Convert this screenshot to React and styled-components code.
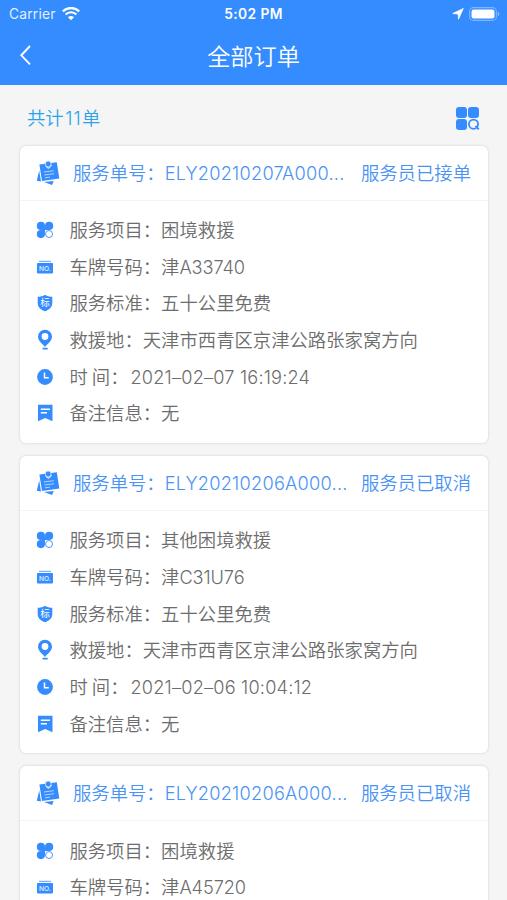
import React from "react";
import styled, { createGlobalStyle } from "styled-components";

const BLUE = "#348cfe";

const GlobalStyle = createGlobalStyle`
  * { box-sizing: border-box; }
  html, body { margin: 0; padding: 0; background: #f5f5f5; }
  body { overflow: hidden; }
`;

const Screen = styled.div`
  width: 507px;
  height: 900px;
  overflow: hidden;
  display: flex;
  flex-direction: column;
  background: #f5f5f5;
  color: #6d6d6d;
  font-family: "Noto Sans CJK SC", sans-serif;
  font-weight: 350;
  font-size: 18.35px;
  white-space: nowrap;
`;

const Header = styled.header`
  flex: none;
  height: 85px;
  background: ${BLUE};
  color: #fff;
`;

const StatusBar = styled.div`
  display: grid;
  grid-template-columns: 1fr auto 1fr;
  align-items: center;
  height: 27px;
  padding: 0 7px 0 9px;
  font-family: Inter, sans-serif;
  font-size: 13.8px;
`;

const Carrier = styled.div`
  display: flex;
  align-items: center;
  gap: 6px;
  font-weight: 400;
  letter-spacing: 0.2px;
  color: #e3efff;
`;

const Clock = styled.div`
  font-weight: 600;
  font-size: 13.8px;
  letter-spacing: 0.4px;
  margin-right: 2px;
`;

const StatusIcons = styled.div`
  display: flex;
  align-items: center;
  justify-content: flex-end;
  gap: 5px;
`;

const NavBar = styled.div`
  display: grid;
  grid-template-columns: 60px 1fr 60px;
  align-items: center;
  height: 56px;
`;

const BackButton = styled.button`
  display: flex;
  height: 44px;
  padding: 0 0 0 19px;
  align-items: center;
  border: 0;
  background: none;
`;

const Title = styled.h1`
  margin: 0;
  padding-bottom: 1px;
  text-align: center;
  font-size: 23.2px;
  font-weight: 350;
`;

const Summary = styled.div`
  flex: none;
  display: flex;
  align-items: center;
  justify-content: space-between;
  height: 61px;
  padding: 5px 27px 0 27px;
  color: #2ba3ea;
`;

const List = styled.main`
  flex: none;
  display: flex;
  flex-direction: column;
  gap: 13.2px;
  padding: 0 19px 0 20px;
`;

const Card = styled.section`
  height: 297px;
  background: #fff;
  border-radius: 6px;
  box-shadow: 0 0 3px rgba(0, 0, 0, 0.16);
`;

const CardHead = styled.div`
  display: flex;
  align-items: center;
  height: 55px;
  padding: 0 17px 0 16px;
  border-bottom: 1px solid #f3f3f3;
  color: #4a93f5;
`;

const Label = styled.span`
  padding-bottom: 2px;
`;

const OrderNumber = styled(Label)`
  flex: 1;
  padding-left: 12px;
`;

const CardBody = styled.div`
  padding: 10.9px 16px 0;
`;

const Row = styled.div`
  display: flex;
  align-items: center;
  height: 36.65px;
`;

const RowIcon = styled.span`
  display: flex;
  width: 33.4px;
`;

const Latin = styled.span`
  font-family: Inter, sans-serif;
  font-weight: 350;
  font-size: 18.2px;
  line-height: 1;
  letter-spacing: ${(p) => p.$spacing || 0}px;
  margin-left: ${(p) => p.$lead || 0}px;
`;

function WifiIcon() {
  return (
    <svg width="18" height="14" viewBox="0 0 18 14" fill="none">
      <path d="M.8 4.300a11.800 11.800 0 0 1 16.400 0" stroke="#fff" strokeWidth="2.300" />
      <path d="M3.600 7.500a7.600 7.600 0 0 1 10.800 0" stroke="#fff" strokeWidth="2.200" />
      <path d="M9 13.300 6 10.200a4.200 4.200 0 0 1 6 0Z" fill="#fff" />
    </svg>
  );
}

function LocationIcon() {
  return (
    <svg width="12" height="12" viewBox="0 0 12 12" fill="#fff">
      <path d="M11.300.5.7 5.500l5.400.600.400 5.200Z" stroke="#fff" strokeWidth=".7" strokeLinejoin="round" />
    </svg>
  );
}

function BatteryIcon() {
  return (
    <svg width="31" height="14" viewBox="0 0 31 14">
      <rect x=".6" y=".6" width="26.800" height="12.800" rx="4" fill="none" stroke="#7fb6ff" strokeWidth="1.100" />
      <rect x="2.500" y="2.500" width="23" height="9" rx="2.300" fill="#fff" />
      <path d="M28.800 4.800c2 .7 2 3.700 0 4.400Z" fill="#8fc0ff" />
    </svg>
  );
}

function BackIcon() {
  return (
    <svg width="13" height="21" viewBox="0 0 13 21" fill="none" stroke="#fff" strokeWidth="1.900">
      <path d="M11 1 2.300 10.300l8.700 9" />
    </svg>
  );
}

function FilterIcon() {
  return (
    <svg width="25" height="25" viewBox="0 0 25 25" fill={BLUE}>
      <rect x="1" y="1" width="11" height="11" rx="3" />
      <rect x="13" y="1" width="11" height="11" rx="3" />
      <rect x="1" y="13" width="11" height="11" rx="3" />
      <circle cx="18.500" cy="18.200" r="4.600" fill="none" stroke={BLUE} strokeWidth="1.800" />
      <path d="m20.500 20 3.300 3.300" stroke={BLUE} strokeWidth="1.800" />
    </svg>
  );
}

function OrderIcon() {
  return (
    <svg width="25" height="26" viewBox="0 0 25 26">
      <path d="M3.200 10.500.8 20.800l4.200.600ZM8 22l8 3 1.700-4Z" fill={BLUE} />
      <path d="m3.400 4.500 17.400-2.300 2.500 16.300L6 21Z" fill={BLUE} />
      <circle cx="12.200" cy="4" r="2.900" fill={BLUE} stroke="#d5e6ff" strokeWidth=".8" />
      <path d="m9.800 6.300 2.700 1.900 3.200-3.100" fill="none" stroke="#d5e6ff" strokeWidth="1.100" />
      <path d="m7.900 12 9.800-1.300M8.400 15l9.700-1.300M9 17.800l5-.7" fill="none" stroke="#b5d3ff" strokeWidth="1" />
    </svg>
  );
}

function ServiceIcon() {
  return (
    <svg width="18" height="18" viewBox="0 0 18 18" fill={BLUE}>
      <circle cx="4.900" cy="4.900" r="4.100" />
      <circle cx="13.100" cy="4.900" r="4.100" />
      <circle cx="4.900" cy="13.100" r="4.100" />
      <path d="M6 6h6v3H9v3H6Z" />
      <circle cx="13" cy="13" r="3.500" fill="#fff" stroke={BLUE} strokeWidth=".9" />
    </svg>
  );
}

function PlateIcon() {
  return (
    <svg width="18" height="18" viewBox="0 0 18 18">
      <path d="M3 3.400h12" stroke="#79b2ff" strokeWidth="1.300" />
      <rect x="1" y="5" width="16" height="10.400" rx=".8" fill={BLUE} />
      <text x="9" y="12.600" fill="#e8f2ff" fontFamily="Inter, sans-serif" fontSize="6.600" fontWeight="500" textAnchor="middle">NO.</text>
    </svg>
  );
}

function ShieldIcon() {
  return (
    <svg width="18" height="18" viewBox="0 0 18 18">
      <path d="M9 .8c2 1.500 4.700 2 7.300 2v6.500c0 4-3.500 6.700-7.300 8-3.800-1.300-7.300-4-7.300-8V2.800c2.600 0 5.300-.5 7.300-2Z" fill={BLUE} />
      <text x="9" y="12.300" fill="#fff" fontFamily="Noto Sans CJK SC, sans-serif" fontSize="9.500" fontWeight="400" textAnchor="middle">标</text>
    </svg>
  );
}

function PinIcon() {
  return (
    <svg width="18" height="22" viewBox="0 0 18 22">
      <path fillRule="evenodd" d="M9 .7a7 7 0 0 1 7 7c0 4-4.500 7-7 10.300C6.500 14.700 2 11.700 2 7.700a7 7 0 0 1 7-7Zm0 3.400a3.400 3.400 0 1 0 0 6.800 3.400 3.400 0 0 0 0-6.800Z" fill={BLUE} />
      <path d="M7.300 19.600h3.700" stroke={BLUE} strokeWidth="1.800" strokeLinecap="round" />
    </svg>
  );
}

function ClockIcon() {
  return (
    <svg width="18" height="18" viewBox="0 0 18 18">
      <circle cx="9" cy="9" r="7.900" fill={BLUE} />
      <path d="M8.500 4.500v5.300h4.300" fill="none" stroke="#fff" strokeWidth="1.500" />
    </svg>
  );
}

function NoteIcon() {
  return (
    <svg width="18" height="18" viewBox="0 0 18 18">
      <path d="M2 .7h14.500v16.500L9.200 14 2 17.200Z" fill={BLUE} />
      <path d="M4.800 5.300h9.200M4.800 8.800h6.200" stroke="#fff" strokeWidth="1.500" />
    </svg>
  );
}

const orders = [
  { number: "ELY20210207A000...", status: "服务员已接单", service: "困境救援", plate: "A33740", time: "2021–02–07 16:19:24" },
  { number: "ELY20210206A000...", status: "服务员已取消", service: "其他困境救援", plate: "C31U76", time: "2021–02–06 10:04:12" },
  { number: "ELY20210206A000...", status: "服务员已取消", service: "困境救援", plate: "A45720", time: "" },
];

function Field({ icon, children }) {
  return (
    <Row>
      <RowIcon>{icon}</RowIcon>
      <Label>{children}</Label>
    </Row>
  );
}

function OrderCard({ order }) {
  return (
    <Card>
      <CardHead>
        <OrderIcon />
        <OrderNumber>服务单号：<Latin $spacing={0.25}>{order.number}</Latin></OrderNumber>
        <Label>{order.status}</Label>
      </CardHead>
      <CardBody>
        <Field icon={<ServiceIcon />}>服务项目：{order.service}</Field>
        <Field icon={<PlateIcon />}>车牌号码：津<Latin $spacing={-0.1}>{order.plate}</Latin></Field>
        {order.time && (
          <>
            <Field icon={<ShieldIcon />}>服务标准：五十公里免费</Field>
            <Field icon={<PinIcon />}>救援地：天津市西青区京津公路张家窝方向</Field>
            <Field icon={<ClockIcon />}>时 间：<Latin $lead={2} $spacing={0.18}>{order.time}</Latin></Field>
            <Field icon={<NoteIcon />}>备注信息：无</Field>
          </>
        )}
      </CardBody>
    </Card>
  );
}

export default function App() {
  return (
    <Screen>
      <GlobalStyle />
      <Header>
        <StatusBar>
          <Carrier>Carrier <WifiIcon /></Carrier>
          <Clock>5:02 PM</Clock>
          <StatusIcons><LocationIcon /><BatteryIcon /></StatusIcons>
        </StatusBar>
        <NavBar>
          <BackButton aria-label="返回"><BackIcon /></BackButton>
          <Title>全部订单</Title>
        </NavBar>
      </Header>
      <Summary>
        <Label>共计<Latin $lead={1.5} $spacing={1.2}>11</Latin>单</Label>
        <FilterIcon />
      </Summary>
      <List>
        {orders.map((order, i) => <OrderCard key={i} order={order} />)}
      </List>
    </Screen>
  );
}
